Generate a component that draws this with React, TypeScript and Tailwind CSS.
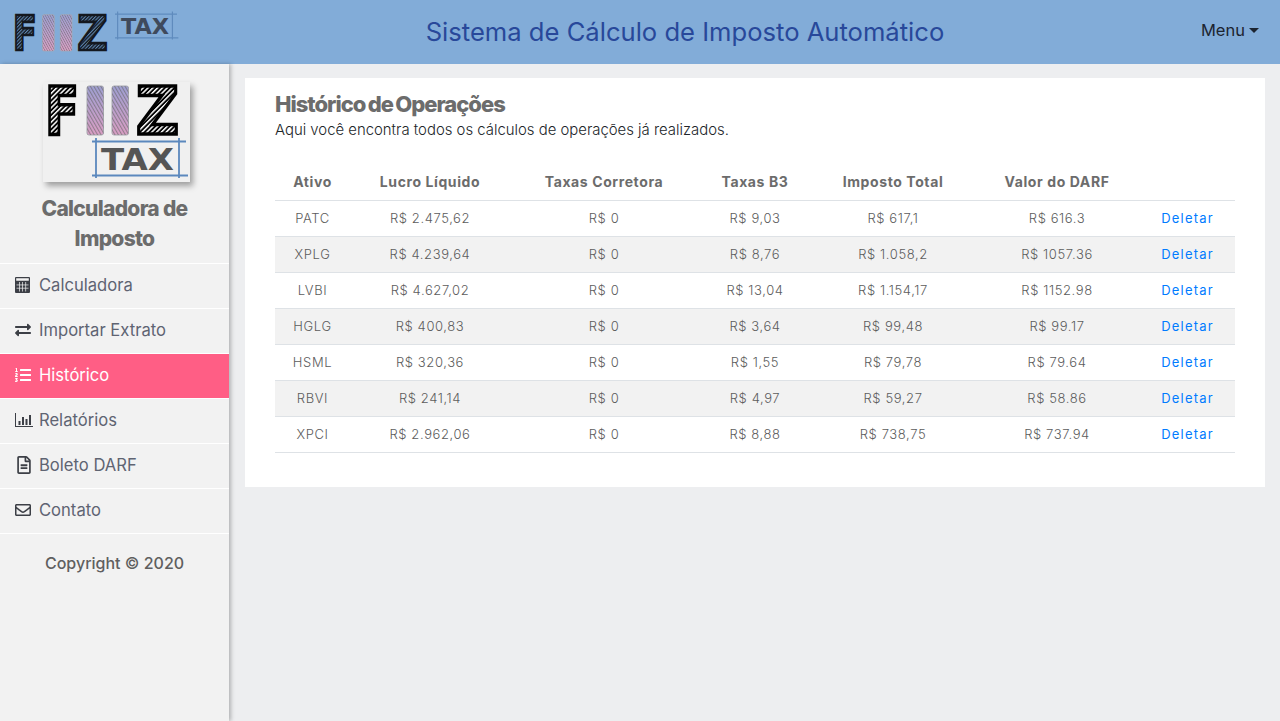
import React from 'react';
import { FaExchangeAlt, FaListOl, FaRegFileAlt, FaRegEnvelope } from 'react-icons/fa';

const FONT = 'font-["Inter","Liberation_Sans",sans-serif]';

const CalcIcon = () => (
    <svg width="15" height="16" viewBox="0 0 15 16" fill="currentColor">
        <path fillRule="evenodd" d="M1 0h13a1 1 0 0 1 1 1v14a1 1 0 0 1-1 1H1a1 1 0 0 1-1-1V1a1 1 0 0 1 1-1zm.2 1.2v2.6h12.6V1.2H1.200z" />
        <g fill="#f2f2f2">
            <rect x="4" y="5" width="0.700" height="9.500" />
            <rect x="7.200" y="5" width="0.700" height="9.500" />
            <rect x="10.400" y="5" width="0.700" height="9.500" />
            <rect x="1.500" y="7.600" width="12" height="0.700" />
            <rect x="1.500" y="10.800" width="12" height="0.700" />
        </g>
    </svg>
);

const BarsIcon = () => (
    <svg width="18" height="14" viewBox="0 0 18 14" fill="currentColor">
        <rect x="0" y="0" width="1" height="14" />
        <rect x="0" y="13" width="18" height="1" />
        <rect x="3.500" y="8" width="2" height="4" />
        <rect x="7" y="4" width="2" height="8" />
        <rect x="10.500" y="6" width="2" height="6" />
        <rect x="14" y="2" width="2" height="10" />
    </svg>
);

const Fiiz = ({ id, dark, gap, transform }: { id: string; dark: string; gap: string; transform: string }) => (
    <g transform={transform}>
        <defs>
            <pattern id={`hatch-${id}`} width="3.400" height="3.400" patternUnits="userSpaceOnUse" patternTransform="rotate(45)">
                <rect width="3.400" height="3.400" fill={dark} />
                <rect width="1.500" height="3.400" fill={gap} />
            </pattern>
            <pattern id={`stripe-${id}`} width="3" height="3" patternUnits="userSpaceOnUse" patternTransform="rotate(-30)">
                <rect width="1.100" height="3" fill="#666" fillOpacity="0.6" />
            </pattern>
            <linearGradient id={`grad-${id}`} x1="0" y1="0" x2="0" y2="1">
                <stop offset="0" stopColor="#9fa0d4" />
                <stop offset="1" stopColor="#dc9fc6" />
            </linearGradient>
        </defs>
        <text x="1" y="48.500" textLength="34" lengthAdjust="spacingAndGlyphs" fontFamily="'DejaVu Sans',sans-serif" fontWeight="700" fontSize="66" fill={`url(#hatch-${id})`} stroke={dark} strokeWidth="3.500">F</text>
        {[43, 68].map((x) => (
            <g key={x}>
                <rect x={x} y="1" width="16.500" height="49" rx="2" fill={`url(#grad-${id})`} stroke="#a8a8b0" />
                <rect x={x} y="1" width="16.500" height="49" rx="2" fill={`url(#stripe-${id})`} />
            </g>
        ))}
        <text x="92" y="48.500" textLength="43" lengthAdjust="spacingAndGlyphs" fontFamily="'DejaVu Sans',sans-serif" fontWeight="700" fontSize="66" fill={`url(#hatch-${id})`} stroke={dark} strokeWidth="3.500">Z</text>
    </g>
);

const Tax = ({ fill, line, transform }: { fill: string; line: string; transform: string }) => (
    <g transform={transform}>
        <path d="M0 1.500h94M0 35.500h96M4 -2v40M87 -2v40" stroke={line} strokeWidth="1.800" fill="none" />
        <text x="9" y="30" textLength="73" lengthAdjust="spacingAndGlyphs" fontFamily="'DejaVu Sans',sans-serif" fontWeight="700" fontSize="31" fill={fill}>TAX</text>
    </g>
);

const navItems = [
    { label: 'Calculadora', icon: <CalcIcon /> },
    { label: 'Importar Extrato', icon: <FaExchangeAlt size={16} /> },
    { label: 'Histórico', icon: <FaListOl size={16} />, active: true },
    { label: 'Relatórios', icon: <BarsIcon /> },
    { label: 'Boleto DARF', icon: <FaRegFileAlt size={18} /> },
    { label: 'Contato', icon: <FaRegEnvelope size={16} /> },
];

const rows = [
    ['PATC', 'R$ 2.475,62', 'R$ 0', 'R$ 9,03', 'R$ 617,1', 'R$ 616.3'],
    ['XPLG', 'R$ 4.239,64', 'R$ 0', 'R$ 8,76', 'R$ 1.058,2', 'R$ 1057.36'],
    ['LVBI', 'R$ 4.627,02', 'R$ 0', 'R$ 13,04', 'R$ 1.154,17', 'R$ 1152.98'],
    ['HGLG', 'R$ 400,83', 'R$ 0', 'R$ 3,64', 'R$ 99,48', 'R$ 99.17'],
    ['HSML', 'R$ 320,36', 'R$ 0', 'R$ 1,55', 'R$ 79,78', 'R$ 79.64'],
    ['RBVI', 'R$ 241,14', 'R$ 0', 'R$ 4,97', 'R$ 59,27', 'R$ 58.86'],
    ['XPCI', 'R$ 2.962,06', 'R$ 0', 'R$ 8,88', 'R$ 738,75', 'R$ 737.94'],
];

const headers = ['Ativo', 'Lucro Líquido', 'Taxas Corretora', 'Taxas B3', 'Imposto Total', 'Valor do DARF', ''];

export default function App() {
    return (
        <div className={`h-[721px] overflow-hidden flex flex-col bg-[#edeef0] ${FONT}`}>
            <header className="h-16 shrink-0 bg-[#82acd8] flex items-center justify-between pl-[10px] pr-[21px]">
                <svg width="170" height="46" viewBox="0 0 170 46" className="mt-[2px] overflow-visible">
                    <Fiiz id="top" dark="#14181f" gap="#5f88b4" transform="translate(2 4) scale(0.71 0.74)" />
                    <Tax fill="#3f4a5c" line="#5f8bbd" transform="translate(105 3) scale(0.66 0.7)" />
                </svg>
                <h1 className="text-[25.600px] text-[#28489a] mr-[11px]">Sistema de Cálculo de Imposto Automático</h1>
                <button className="flex items-center gap-[4px] text-[16.500px] text-[#1c2430] mb-[4px]">
                    Menu
                    <span className="w-0 h-0 border-x-[5px] border-x-transparent border-t-[5px] border-t-[#1c2430]" />
                </button>
            </header>
            <div className="flex flex-1 min-h-0">
                <aside className="w-[229px] shrink-0 bg-[#f2f2f2] shadow-[2px_0_4px_rgba(0,0,0,0.25)]">
                    <div className="h-[199px] flex flex-col items-center pt-[18px]">
                        <svg width="147" height="100" viewBox="0 0 147 100" className="ml-[4px] overflow-visible bg-[#f0f0f0] shadow-[3px_4px_6px_rgba(0,0,0,0.35)]">
                            <Fiiz id="side" dark="#000000" gap="#ffffff" transform="translate(1 3)" />
                            <Tax fill="#555555" line="#5b88bd" transform="translate(49 58)" />
                        </svg>
                        <h3 className="mt-[12px] w-[170px] text-center text-[21px] leading-[30px] font-extrabold tracking-[-0.7px] text-[#6c6c6c]">Calculadora de Imposto</h3>
                    </div>
                    <nav className="border-t border-white">
                        {navItems.map((item) => (
                            <a key={item.label} className={`h-[45px] flex items-center pl-[15px] pb-[2px] text-[16.600px] border-b border-white ${
                                item.active ? 'bg-[#ff5e85] text-white' : 'text-[#5f6472]'
                            }`}>
                                <span className={`w-[24px] flex ${item.active ? 'text-white' : 'text-[#3c3f46]'}`}>{item.icon}</span>
                                {item.label}
                            </a>
                        ))}
                    </nav>
                    <p className="mt-[17px] text-center text-[16px] font-medium text-[#5f5f5f]">Copyright © 2020</p>
                </aside>
                <main className="flex-1 pt-[14px] pl-4 pr-[15px]">
                    <section className="h-[409px] bg-white px-[30px] pt-[12px]">
                        <h2 className="text-[22px] leading-[28px] font-extrabold tracking-[-1px] [word-spacing:-1.500px] text-[#6c6c6c]">Histórico de Operações</h2>
                        <p className="text-[14.900px] leading-[24px] font-light text-[#212529]">Aqui você encontra todos os cálculos de operações já realizados.</p>
                        <table className="mt-[22px] w-[960px] table-fixed border-collapse text-center">
                            <colgroup>
                                <col className="w-[75px]" />
                                <col className="w-[160px]" />
                                <col className="w-[188px]" />
                                <col className="w-[114px]" />
                                <col className="w-[162px]" />
                                <col className="w-[166px]" />
                                <col className="w-[95px]" />
                            </colgroup>
                            <thead>
                                <tr className="h-[36px] border-b border-[#dee2e6]">
                                    {headers.map((h, i) => (
                                        <th key={i} className="text-[14px] font-bold tracking-[0.6px] text-[#6c6c6c]">{h}</th>
                                    ))}
                                </tr>
                            </thead>
                            <tbody>
                                {rows.map((row, i) => (
                                    <tr key={row[0]} className={`h-[36px] border-b border-[#dee2e6] ${i % 2 === 1 ? 'bg-[#f2f2f2]' : ''}`}>
                                        {row.map((cell, j) => (
                                            <td key={j} className="pt-[2px] text-[13px] tracking-[0.6px] font-light text-[#5c5c5c]">{cell}</td>
                                        ))}
                                        <td className="pt-[2px] text-[13px] tracking-[1.200px] text-[#007bff]">Deletar</td>
                                    </tr>
                                ))}
                            </tbody>
                        </table>
                    </section>
                </main>
            </div>
        </div>
    );
}
